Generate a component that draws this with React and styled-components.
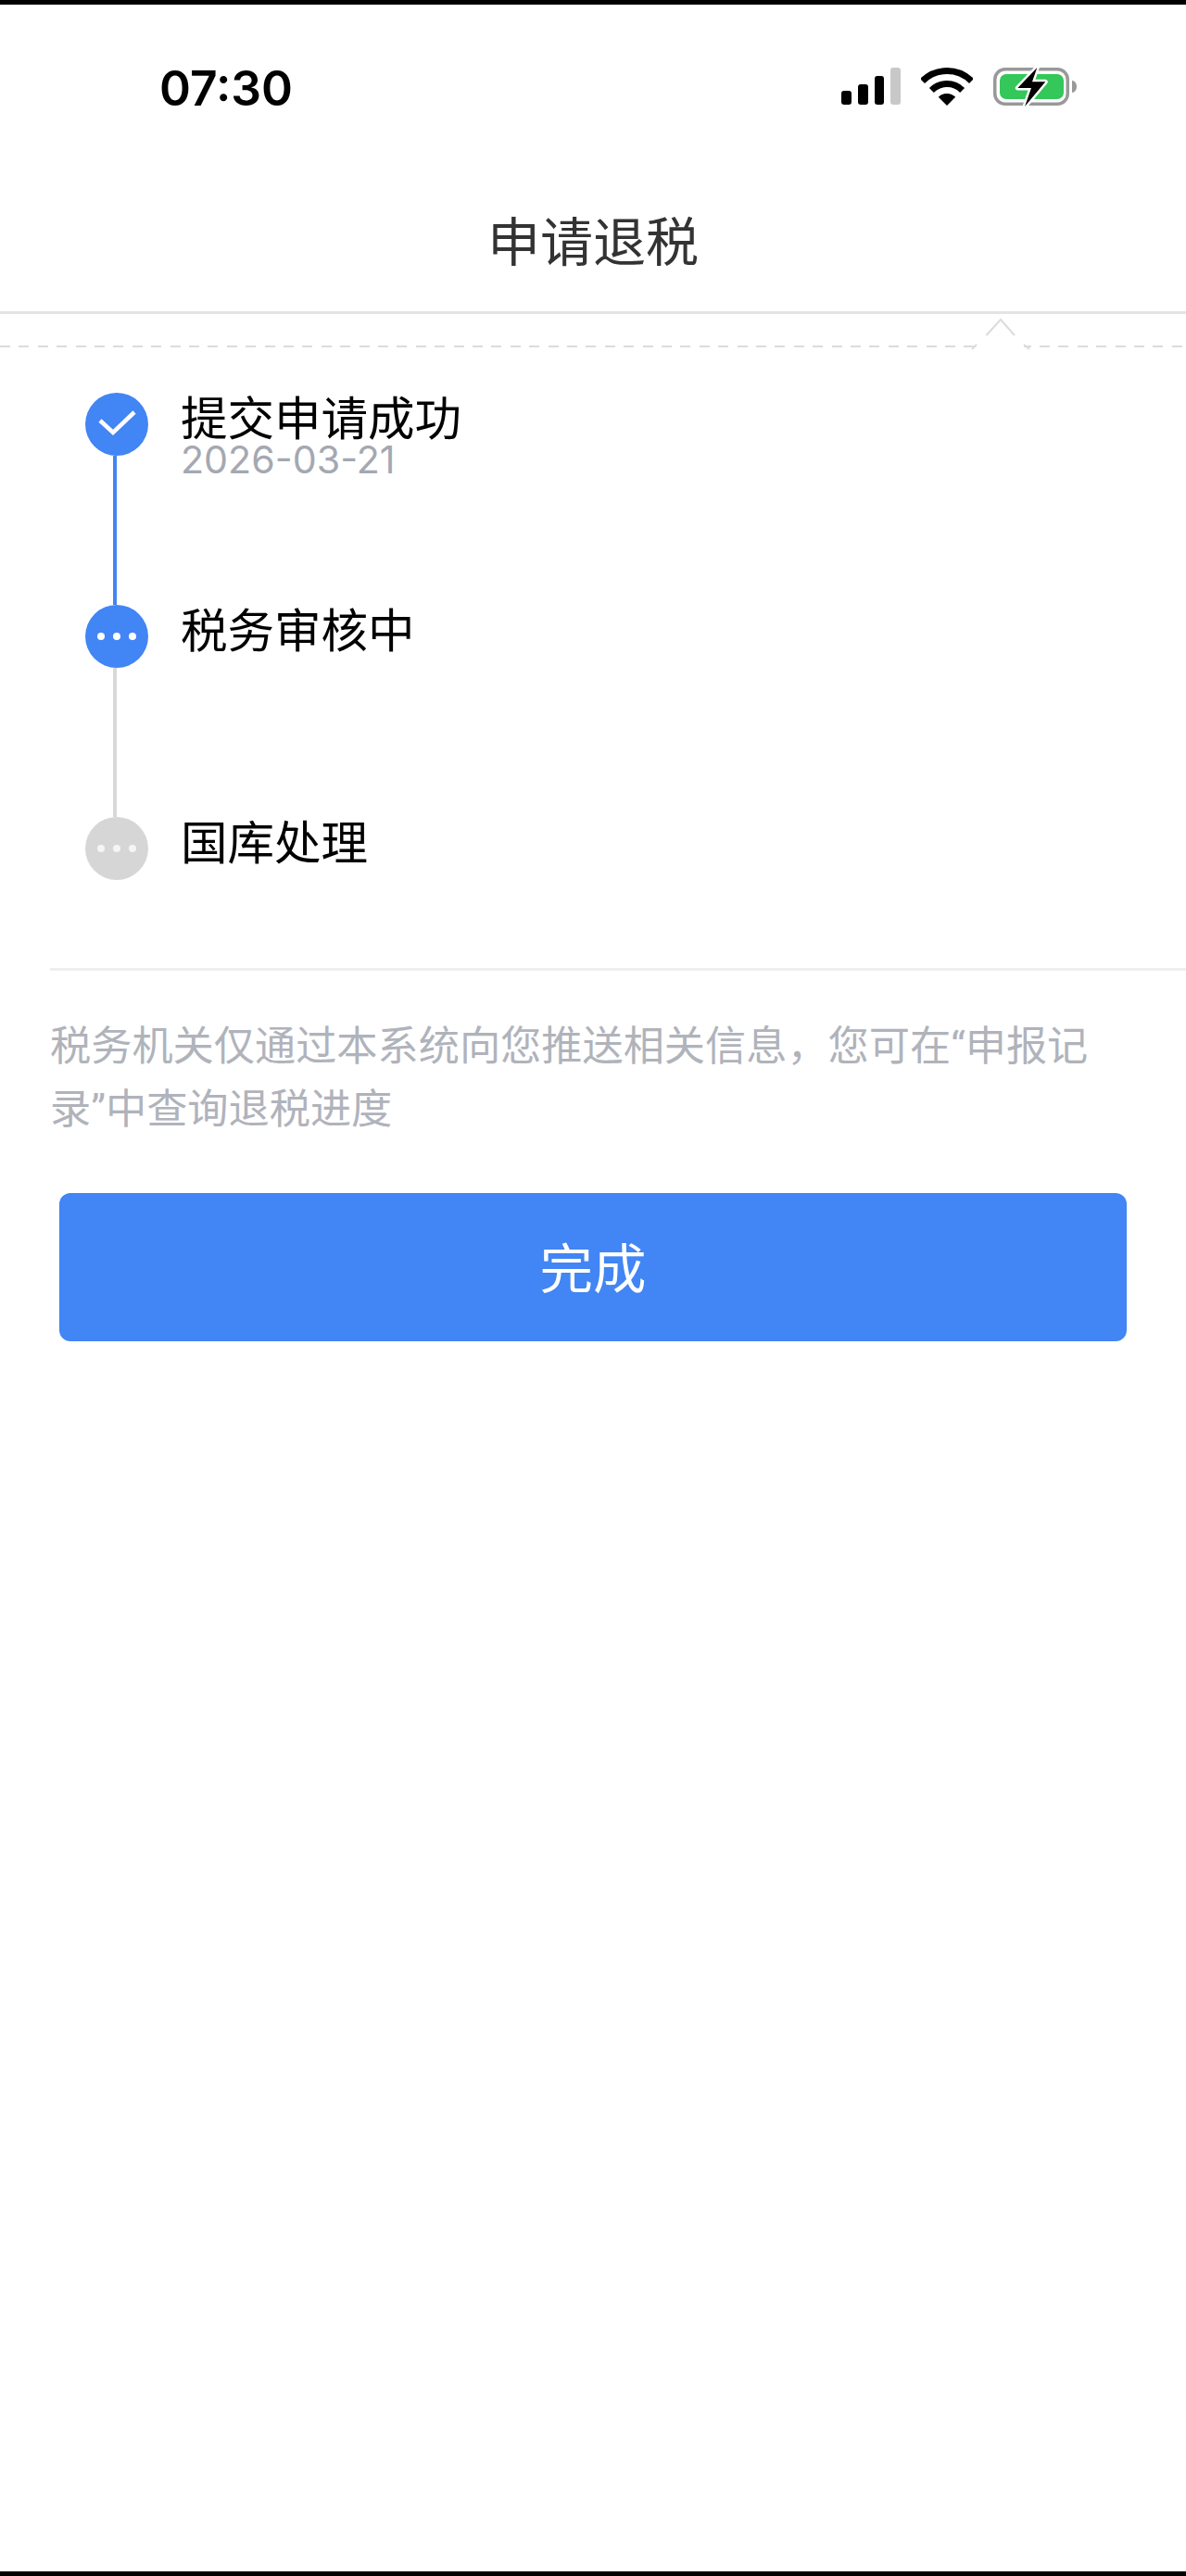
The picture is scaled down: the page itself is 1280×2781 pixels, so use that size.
import React from 'react';
import styled, { createGlobalStyle } from 'styled-components';

const BLUE = '#4285f4';
const GREY = '#d6d6d6';

const GlobalStyle = createGlobalStyle`
    html, body {
        margin: 0;
        padding: 0;
        background: #fff;
    }
    body {
        font-family: Roboto, "Noto Sans CJK SC", sans-serif;
    }
`;

const Page = styled.div`
    box-sizing: border-box;
    width: 1280px;
    height: 2781px;
    border-top: 5px solid #000;
    border-bottom: 5px solid #000;
    background: #fff;
    overflow: hidden;
`;

const StatusBar = styled.div`
    box-sizing: border-box;
    height: 175px;
    padding: 60px 118px 0 172px;
    display: flex;
    justify-content: space-between;
    align-items: flex-start;
`;

const Clock = styled.div`
    font-family: Inter, sans-serif;
    font-weight: 600;
    font-size: 51.5px;
    line-height: 60px;
    color: #000;
`;

const StatusIcons = styled.div`
    display: flex;
    align-items: flex-start;
    gap: 22px;
    padding-top: 8px;
`;

const NavBar = styled.div`
    box-sizing: content-box;
    height: 147px;
    padding-top: 9px;
    display: flex;
    align-items: center;
    justify-content: center;
    border-bottom: 3px solid #e3e3e8;
`;

const Title = styled.h1`
    margin: 0;
    font-size: 57px;
    font-weight: 400;
    line-height: 64px;
    color: #333;
`;

const DashBand = styled.div`
    position: relative;
    height: 36px;
    display: flex;
    align-items: flex-end;
`;

const DashLine = styled.div`
    flex: 1;
    height: 2px;
    background: repeating-linear-gradient(90deg, #dcdcdc 0 11px, transparent 11px 20.4px);
`;

const Notch = styled.svg`
    position: absolute;
    top: 4px;
    right: 168px;
`;

const Timeline = styled.div`
    padding: 49px 0 0 92px;
`;

const Step = styled.div`
    display: flex;
    gap: 35px;
`;

const Marker = styled.div`
    width: 68px;
    display: flex;
    flex-direction: column;
    align-items: center;
`;

const Dot = styled.div`
    width: 68px;
    height: 68px;
    flex: none;
    border-radius: 50%;
    background: ${props => props.color};
    display: flex;
    align-items: center;
    justify-content: center;
    gap: 9px;
`;

const Pip = styled.span`
    width: 8px;
    height: 8px;
    border-radius: 50%;
    background: #fff;
    opacity: ${props => (props.dim ? 0.75 : 1)};
`;

const Connector = styled.div`
    width: 4px;
    height: 161px;
    margin-left: -4px;
    background: ${props => props.color};
`;

const StepText = styled.div`
    padding-top: 3px;
`;

const StepLabel = styled.div`
    font-size: 50.5px;
    line-height: 52px;
    color: #000;
`;

const StepDate = styled.div`
    font-family: Inter, sans-serif;
    font-size: 41.2px;
    line-height: 34px;
    color: #a4a8b2;
`;

const Divider = styled.div`
    height: 3px;
    margin: 95px 0 0 54px;
    background: #eeeeee;
`;

const Notice = styled.p`
    margin: 48px 0 0;
    padding: 0 40px 0 54px;
    font-size: 44.2px;
    line-height: 68px;
    color: #b0b3bb;
`;

const DoneButton = styled.button`
    display: flex;
    align-items: center;
    justify-content: center;
    width: 1152px;
    height: 160px;
    margin: 56px 0 0 64px;
    padding: 0 0 5px;
    border: 0;
    border-radius: 12px;
    background: ${BLUE};
    color: #fff;
    font-family: inherit;
    font-size: 57.5px;
`;

const SignalIcon = () => (
    <svg width="64" height="40" viewBox="0 0 64 40">
        <rect x="0" y="25" width="11" height="15" rx="3" fill="#000" />
        <rect x="18" y="18" width="11" height="22" rx="3" fill="#000" />
        <rect x="36" y="9" width="10" height="31" rx="3" fill="#000" />
        <rect x="53" y="0" width="11" height="40" rx="3" fill="#c8c8c8" />
    </svg>
);

const WifiIcon = () => (
    <svg width="56" height="41" viewBox="0 0 56 41" fill="none">
        <path d="M1.5 14.5A37.5 37.5 0 0 1 54.5 14.5" stroke="#000" strokeWidth="7" />
        <path d="M11.4 24.4A23.5 23.5 0 0 1 44.6 24.4" stroke="#000" strokeWidth="7" />
        <path d="M28 41L18.8 31.8A13 13 0 0 1 37.2 31.8Z" fill="#000" />
    </svg>
);

const BatteryShape = styled.svg`
    margin-top: -1px;
`;

const BatteryIcon = () => (
    <BatteryShape width="90" height="44" viewBox="0 0 90 44" fill="none">
        <rect x="1.75" y="2.75" width="78.5" height="37.5" rx="11" stroke="#999" strokeWidth="3.5" />
        <rect x="7" y="8" width="69" height="27" rx="7" fill="#34c759" />
        <path d="M85 15C88 15 90 18 90 21.5C90 25 88 28 85 28Z" fill="#999" />
        <path
            d="M47.3 1L26.3 23H41L34 43L56.3 16.3H42Z"
            fill="#000"
            stroke="#fff"
            strokeWidth="5"
            strokeLinejoin="round"
            paintOrder="stroke"
        />
    </BatteryShape>
);

const CheckIcon = () => (
    <svg width="68" height="68" viewBox="0 0 68 68" fill="none">
        <path d="M16 30L30 43L53 21" stroke="#fff" strokeWidth="4.5" />
    </svg>
);

const steps = [
    { label: '提交申请成功', date: '2026-03-21', color: BLUE, done: true, line: BLUE },
    { label: '税务审核中', color: BLUE, line: '#d8d8d8' },
    { label: '国库处理', color: GREY, dim: true }
];

const TimelineStep = ({ label, date, color, done, dim, line }) => (
    <Step>
        <Marker>
            <Dot color={color}>
                {done ? (
                    <CheckIcon />
                ) : (
                    <>
                        <Pip dim={dim} />
                        <Pip dim={dim} />
                        <Pip dim={dim} />
                    </>
                )}
            </Dot>
            {line && <Connector color={line} />}
        </Marker>
        <StepText>
            <StepLabel>{label}</StepLabel>
            {date && <StepDate>{date}</StepDate>}
        </StepText>
    </Step>
);

const App = () => (
    <Page>
        <GlobalStyle />
        <StatusBar>
            <Clock>07:30</Clock>
            <StatusIcons>
                <SignalIcon />
                <WifiIcon />
                <BatteryIcon />
            </StatusIcons>
        </StatusBar>
        <NavBar>
            <Title>申请退税</Title>
        </NavBar>
        <DashBand>
            <DashLine />
            <Notch width="64" height="37" viewBox="0 0 64 37" fill="none">
                <rect x="6" y="26" width="51" height="10" fill="#fff" />
                <path d="M16.5 19L32 2L47 19" stroke="#dcdcdc" strokeWidth="2" />
                <path d="M1 34L6 29M57 29L63 34" stroke="#dcdcdc" strokeWidth="2" />
            </Notch>
        </DashBand>
        <Timeline>
            {steps.map(step => (
                <TimelineStep key={step.label} {...step} />
            ))}
        </Timeline>
        <Divider />
        <Notice>
            税务机关仅通过本系统向您推送相关信息，您可在“申报记录”中查询退税进度
        </Notice>
        <DoneButton>完成</DoneButton>
    </Page>
);

export default App;
